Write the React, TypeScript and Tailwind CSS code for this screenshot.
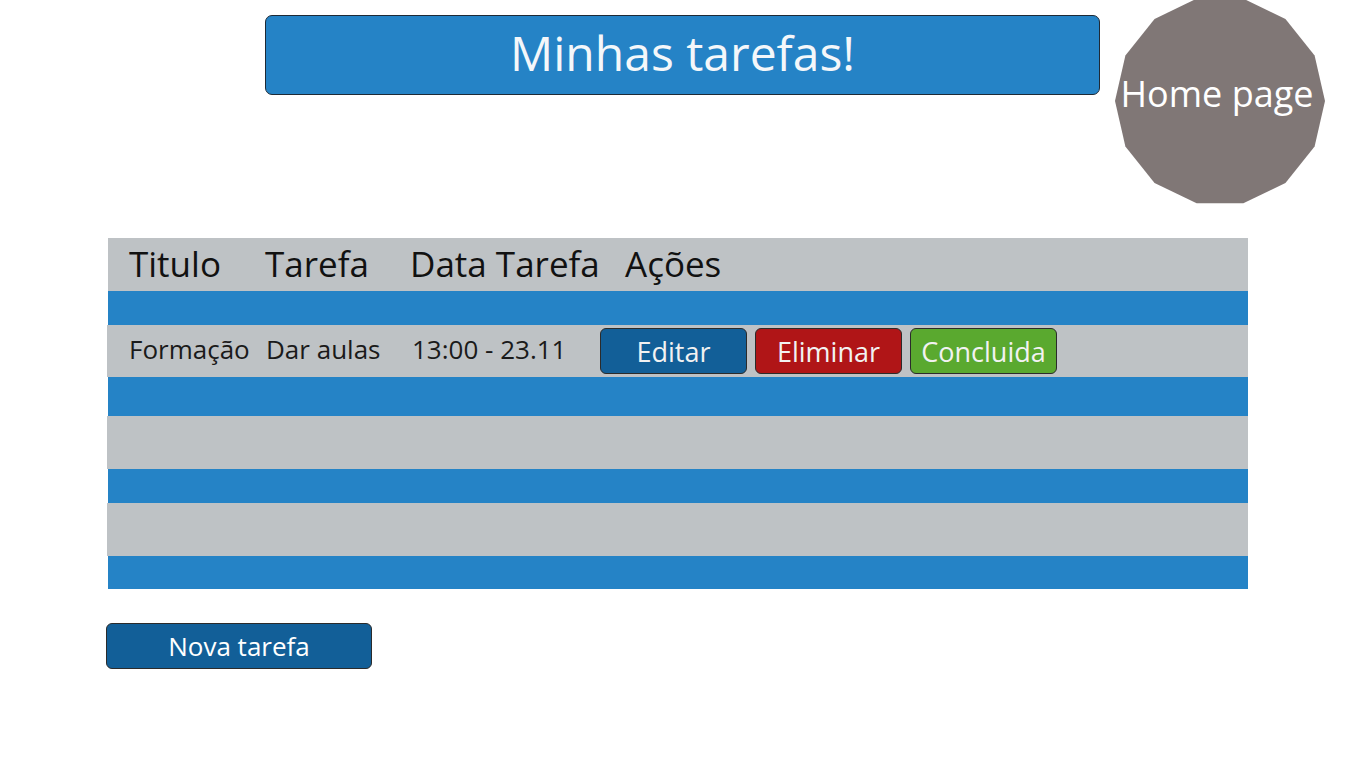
const font = { fontFamily: '"Open Sans", "Noto Sans", sans-serif' };

function HomeBadge() {
  const pts = Array.from({ length: 14 }, (_, i) => {
    const a = (i * 2 * Math.PI) / 14;
    return `${106 + 105 * Math.cos(a)},${106 - 105 * Math.sin(a)}`;
  }).join(' ');
  return (
    <div className="relative ml-[14px] -mt-[20px] h-[212px] w-[212px] shrink-0">
      <svg width="212" height="212" viewBox="0 0 212 212" className="block">
        <polygon points={pts} fill="#807776" />
      </svg>
      <span className="absolute inset-0 flex items-center justify-center pb-[14px] pr-[6px] text-[36px] text-white">Home page</span>
    </div>
  );
}

function ActionButton({ label, bg }: { label: string; bg: string }) {
  return (
    <button className={`h-[46px] w-[147px] rounded-[6px] border border-[#2b2b2b] text-[27px] leading-none text-[#f2f2f2] ${bg}`}>
      {label}
    </button>
  );
}

export default function App() {
  return (
    <main className="h-[768px] w-[1366px] overflow-hidden bg-white" style={font}>
      <div className="flex h-[238px] items-start pt-[15px]">
        <div className="ml-[265px] flex h-[80px] w-[835px] items-center justify-center rounded-[7px] border border-[#1e2a36] bg-[#2583c6] pb-[4px] text-[48px] text-[#f4f7fa]">
          Minhas tarefas!
        </div>
        <HomeBadge />
      </div>

      <div className="ml-[107px] w-[1141px]">
        <div className="ml-px flex h-[53px] items-center bg-[#bec2c5] pl-[21px] text-[35px] text-[#111]">
          <span className="w-[136px]">Titulo</span>
          <span className="w-[145px]">Tarefa</span>
          <span className="w-[215px]">Data Tarefa</span>
          <span>Ações</span>
        </div>
        <div className="ml-px h-[34px] bg-[#2583c6]" />
        <div className="flex h-[52px] items-center bg-[#bec2c5] pb-[4px] pl-[22px] text-[26px] text-[#1a1a1a]">
          <span className="w-[137px]">Formação</span>
          <span className="w-[146px]">Dar aulas</span>
          <span className="w-[188px]">13:00 - 23.11</span>
          <div className="mt-[4px] flex gap-[8px]">
            <ActionButton label="Editar" bg="bg-[#125f98]" />
            <ActionButton label="Eliminar" bg="bg-[#b01517]" />
            <ActionButton label="Concluida" bg="bg-[#5aa92f]" />
          </div>
        </div>
        <div className="ml-px h-[39px] bg-[#2583c6]" />
        <div className="h-[53px] bg-[#bec2c5]" />
        <div className="ml-px h-[34px] bg-[#2583c6]" />
        <div className="h-[53px] bg-[#bec2c5]" />
        <div className="ml-px h-[33px] bg-[#2583c6]" />
      </div>

      <div className="ml-[106px] mt-[34px]">
        <button className="h-[46px] w-[266px] rounded-[6px] border border-[#2b2b2b] bg-[#125f98] text-[26px] leading-none text-white">
          Nova tarefa
        </button>
      </div>
    </main>
  );
}
